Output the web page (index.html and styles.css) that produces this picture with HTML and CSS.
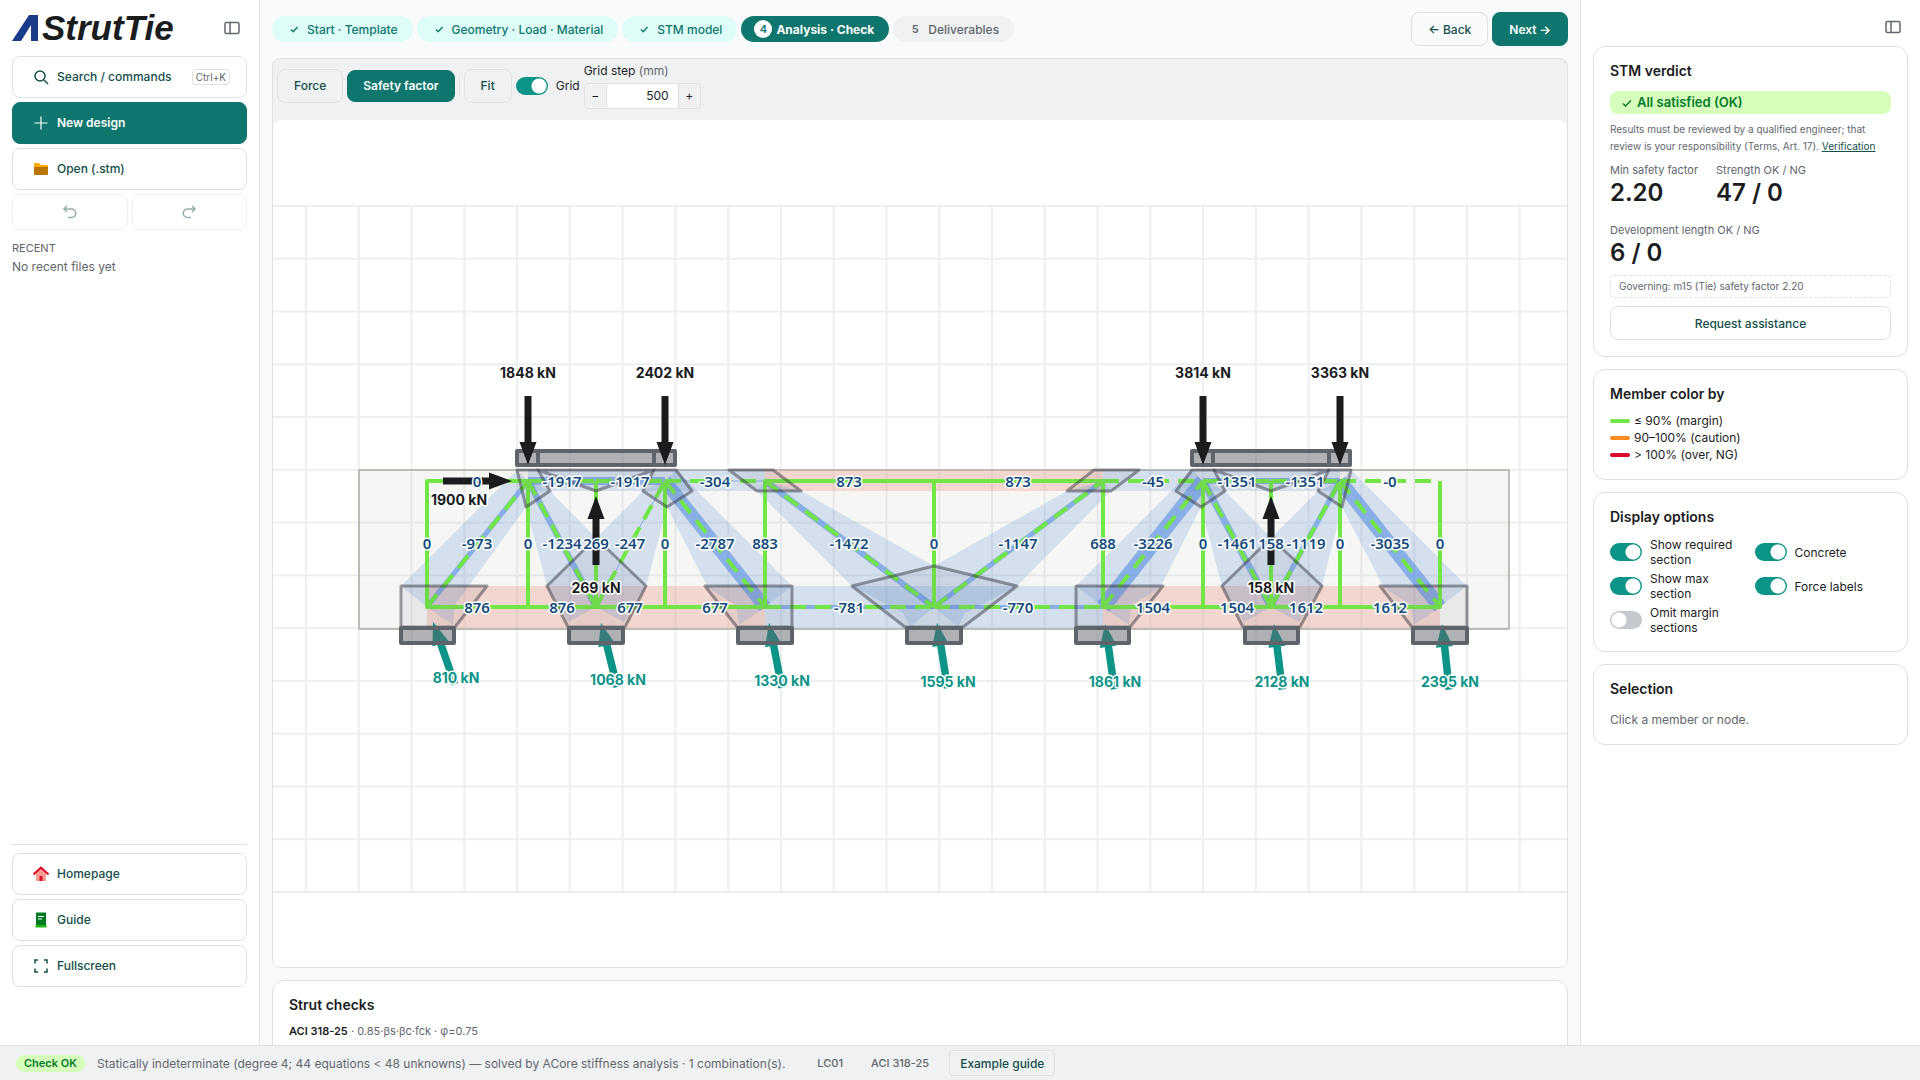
FILE: index.html
```html
<!DOCTYPE html>
<html lang="en">
<head>
<meta charset="utf-8">
<title>AStrutTie</title>
<meta name="viewport" content="width=device-width, initial-scale=1">
<link rel="stylesheet" href="styles.css">
</head>
<body>
<div class="app">
  <aside class="sidebar">
    <header class="brand">
      <div class="logo">
        <svg class="logo-mark" viewBox="0 0 26 26" aria-hidden="true"><path d="M0 26 17 0h9v26h-7V10L9 26z"/></svg>
        <span>StrutTie</span>
      </div>
      <button class="icon-btn" aria-label="Collapse sidebar">
        <svg class="panel-icon" viewBox="0 0 16 16"><rect x="1" y="2.500" width="14" height="11" rx="1.500"/><path d="M6 2.500v11"/></svg>
      </button>
    </header>
    <div class="stack">
      <button class="btn nav">
        <svg class="ico line" viewBox="0 0 16 16"><circle cx="7" cy="7" r="5"/><path d="m11 11 4 4"/></svg>
        Search / commands <kbd>Ctrl+K</kbd>
      </button>
      <button class="btn nav primary">
        <svg class="ico line" viewBox="0 0 16 16"><path d="M8 1.500v13M1.500 8h13"/></svg>
        New design
      </button>
      <button class="btn nav">
        <svg class="ico" viewBox="0 0 16 16"><path fill="#f9ab00" d="M1 3q0-1 1-1h4l2 2h6q1 0 1 1v2H1z"/><path fill="#ba7500" d="M1 6h14v7q0 1-1 1H2q-1 0-1-1z"/></svg>
        Open (.stm)
      </button>
      <div class="history">
        <button class="btn ghost" disabled aria-label="Undo"><svg class="ico line" viewBox="0 0 16 16"><path d="M5 2 2 5l3 3M2 5h7.500a4 4 0 0 1 0 8.500H6"/></svg></button>
        <button class="btn ghost" disabled aria-label="Redo"><svg class="ico line" viewBox="0 0 16 16"><path d="m11 2 3 3-3 3M14 5H6.500a4 4 0 0 0 0 8.500H10"/></svg></button>
      </div>
    </div>
    <section class="recent">
      <h2>RECENT</h2>
      <p>No recent files yet</p>
    </section>
    <nav class="stack side-foot">
      <button class="btn nav"><svg class="ico" viewBox="0 0 16 16"><path fill="#ff9c94" d="M3 7l5-5 5 5v8H3z"/><path fill="none" stroke="#dc0a2a" stroke-width="2" d="m.5 8.500 7.500-7 7.500 7"/><path fill="#dc0a2a" d="M6.500 10h3v5h-3z"/></svg>Homepage</button>
      <button class="btn nav"><svg class="ico" viewBox="0 0 16 16"><path fill="#007a22" d="M3 .500h10v13H3z"/><path fill="#1fb814" d="M2.500 13h11v2.500h-11z"/><path stroke="#fff" d="M5 4.500h6M5 7h4"/></svg>Guide</button>
      <button class="btn nav"><svg class="ico line" viewBox="0 0 16 16"><path d="M2 5.500V2h3M11 2h3v3.500M14 10.500V14h-3M5 14H2v-3.500"/></svg>Fullscreen</button>
    </nav>
  </aside>

  <main class="main">
    <div class="topbar">
      <ol class="steps">
        <li class="step done"><span class="num"><svg class="check" viewBox="0 0 10 10"><path d="m2 5.500 2.200 2.200L8.500 3"/></svg></span>Start · Template</li>
        <li class="step done"><span class="num"><svg class="check" viewBox="0 0 10 10"><path d="m2 5.500 2.200 2.200L8.500 3"/></svg></span>Geometry · Load · Material</li>
        <li class="step done"><span class="num"><svg class="check" viewBox="0 0 10 10"><path d="m2 5.500 2.200 2.200L8.500 3"/></svg></span>STM model</li>
        <li class="step current"><span class="num">4</span>Analysis · Check</li>
        <li class="step"><span class="num">5</span>Deliverables</li>
      </ol>
      <div class="pager">
        <button class="btn">← Back</button>
        <button class="btn primary">Next →</button>
      </div>
    </div>

    <section class="viewer">
      <div class="toolbar">
        <button class="btn">Force</button>
        <button class="btn primary short">Safety factor</button>
        <span class="divider"></span>
        <button class="btn">Fit</button>
        <label class="switch grid-switch"><input type="checkbox" checked>Grid</label>
        <div class="field">
          <label for="step">Grid step <span class="unit">(mm)</span></label>
          <div class="stepper">
            <button aria-label="Decrease">−</button>
            <input id="step" type="text" value="500">
            <button aria-label="Increase">+</button>
          </div>
        </div>
      </div>

      <svg class="canvas" viewBox="273 120 1294 847" role="img" aria-label="Strut-and-tie model">
        <defs>
          <pattern id="grid" x="305" y="205" width="52.770" height="52.770" patternUnits="userSpaceOnUse"><path d="M0 1h52.770M1 0v52.770" stroke="#edeef0" stroke-width="2"/></pattern>
          <path id="arrow" d="M0 0 8.500 23h-5v46h-7V23h-5z"/>
          <path id="arrow-r" d="M0 0 8.500 23h-4.500v43h-7.500V23h-5z"/>
        </defs>
        <rect x="273" y="205" width="1294" height="688" fill="url(#grid)"/>
        <rect class="concrete" x="359" y="470" width="1150" height="159"/>

        <g class="tie-max">
          <path d="M765 470h338v21H765zM427 586h338v42H427zM1103 586h337v42h-337z"/>
        </g>
        <g class="strut-max">
          <path d="M528 470h137v21H528z"/><path d="M665 470h100v21H665z"/>
          <path d="M1103 470h100v21h-100z"/><path d="M1203 470h137v21h-137z"/>
          <path d="M765 586h169v42H765z"/><path d="M934 586h169v42H934z"/>
          <path d="M401 586 517 470 528 481 526 507 455 605 453 625 427 607z"/>
          <path d="M526 507 528 481 550 491 596 538 596 607 568 622 547 586z"/>
          <path d="M596 538 643 491 665 481 667 507 646 586 624 622 596 607z"/>
          <path d="M676 470 792 586 765 607 739 625 736 605 708 588 667 507 665 481z"/>
          <path d="M757 491 765 481 801 491 934 566 934 607 910 627 903 613 852 586z"/>
          <path d="M934 566 1067 491 1103 481 1111 491 1017 586 965 613 958 627 934 607z"/>
          <path d="M1076 586 1192 470 1203 481 1201 507 1160 588 1131 605 1129 625 1103 607z"/>
          <path d="M1201 507 1203 481 1225 491 1271 538 1271 607 1244 622 1222 586z"/>
          <path d="M1271 538 1318 491 1340 481 1342 507 1322 586 1299 622 1271 607z"/>
          <path d="M1351 470 1467 586 1440 607 1414 625 1411 605 1384 588 1342 507 1340 481z"/>
        </g>
        <g class="strut-req">
          <path stroke-width="8" d="M528 481H665"/><path stroke-width="6" d="M1203 481h137"/>
          <path stroke-width="1" d="M665 481h100"/>
          <path stroke-width="4" d="M765 607h338"/>
          <path stroke-width="5" d="M427 607 528 481M934 607 1103 481M1271 607 1340 481"/>
          <path stroke-width="6" d="M528 481 596 607"/><path stroke-width="1" d="M596 607 665 481"/>
          <path stroke-width="13" d="M665 481 765 607"/><path stroke-width="6" d="M765 481 934 607"/>
          <path stroke-width="15" d="M1103 607 1203 481"/><path stroke-width="7" d="M1203 481 1271 607"/>
          <path stroke-width="14" d="M1340 481 1440 607"/>
        </g>

        <g class="tie">
          <path d="M528 481H427V607H765V481H1103V607H1440V481"/>
          <path d="M528 481V607M596 481V607M665 481V607M934 481V607M1203 481V607M1271 481V607M1340 481V607"/>
        </g>
        <g class="strut">
          <path d="M528 481h68"/><path d="M596 481h69"/><path d="M665 481h100"/><path d="M1103 481h100"/><path d="M1203 481h68"/><path d="M1271 481h69"/><path d="M1340 481h100"/>
          <path d="M765 607h169"/><path d="M934 607h169"/>
          <path d="M427 607 528 481"/><path d="M528 481 596 607"/><path d="M596 607 665 481"/><path d="M665 481 765 607"/><path d="M765 481 934 607"/>
          <path d="M934 607 1103 481"/><path d="M1103 607 1203 481"/><path d="M1203 481 1271 607"/><path d="M1271 607 1340 481"/><path d="M1340 481 1440 607"/>
        </g>

        <g class="node">
          <path d="M401 586h86l-32 41h-54z"/><path d="M517 470h21l12 21-24 16z"/><path d="M538 470h116l-58 21z"/>
          <path d="M654 470h22l16 21-25 16-24-16z"/><path d="M547 586 596 538 646 586 625 627H568z"/>
          <path d="M729 470h44l28 21h-44z"/><path d="M705 586h87v41h-55z"/>
          <path d="M852 586 934 566 1017 586 963 627H905z"/>
          <path d="M1094 470h45l-28 21h-44z"/><path d="M1076 586h87l-33 41h-54z"/>
          <path d="M1192 470h22l11 21-24 16-25-16z"/><path d="M1214 470h115l-58 21z"/><path d="M1329 470h22l-9 37-24-16z"/>
          <path d="M1222 586 1271 538 1322 586 1300 627H1243z"/><path d="M1380 586h87v41h-55z"/>
        </g>

        <g class="reaction">
          <use href="#arrow-r" transform="translate(433 622) rotate(-19)"/>
          <use href="#arrow-r" transform="translate(601 623) rotate(-14)"/>
          <use href="#arrow-r" transform="translate(769 623) rotate(-11)"/>
          <use href="#arrow-r" transform="translate(937 623) rotate(-9)"/>
          <use href="#arrow-r" transform="translate(1105 624) rotate(-8)"/>
          <use href="#arrow-r" transform="translate(1274 624) rotate(-7)"/>
          <use href="#arrow-r" transform="translate(1442 624) rotate(-6)"/>
        </g>
        <g class="plate">
          <path d="M401 628h53v15h-53zM569 628h54v15h-54zM738 628h54v15h-54zM907 628h54v15h-54zM1076 628h53v15h-53zM1245 628h53v15h-53zM1413 628h54v15h-54z"/>
          <path d="M517 451h158v14H517zM538 451v14M654 451v14M1192 451h158v14h-158zM1213 451v14M1329 451v14"/>
        </g>
        <g class="load">
          <use href="#arrow" transform="translate(528 465) rotate(180)"/>
          <use href="#arrow" transform="translate(665 465) rotate(180)"/>
          <use href="#arrow" transform="translate(1203 465) rotate(180)"/>
          <use href="#arrow" transform="translate(1340 465) rotate(180)"/>
          <use href="#arrow" transform="translate(512 481) rotate(90)"/>
          <use href="#arrow" transform="translate(596 496)"/>
          <use href="#arrow" transform="translate(1271 496)"/>
        </g>

        <g class="force">
          <text x="477" y="487">0</text><text x="562" y="487">-1917</text><text x="630" y="487">-1917</text><text x="715" y="487">-304</text><text x="849" y="487">873</text><text x="1018" y="487">873</text><text x="1153" y="487">-45</text><text x="1237" y="487">-1351</text><text x="1305" y="487">-1351</text><text x="1390" y="487">-0</text>
          <text x="427" y="549">0</text><text x="477" y="549">-973</text><text x="528" y="549">0</text><text x="562" y="549">-1234</text><text x="596" y="549">269</text><text x="630" y="549">-247</text><text x="665" y="549">0</text><text x="715" y="549">-2787</text><text x="765" y="549">883</text><text x="849" y="549">-1472</text><text x="934" y="549">0</text><text x="1018" y="549">-1147</text><text x="1103" y="549">688</text><text x="1153" y="549">-3226</text><text x="1203" y="549">0</text><text x="1237" y="549">-1461</text><text x="1271" y="549">158</text><text x="1306" y="549">-1119</text><text x="1340" y="549">0</text><text x="1390" y="549">-3035</text><text x="1440" y="549">0</text>
          <text x="477" y="613">876</text><text x="562" y="613">876</text><text x="630" y="613">677</text><text x="715" y="613">677</text><text x="849" y="613">-781</text><text x="1018" y="613">-770</text><text x="1153" y="613">1504</text><text x="1237" y="613">1504</text><text x="1306" y="613">1612</text><text x="1390" y="613">1612</text>
        </g>
        <g class="kn">
          <text x="528" y="378">1848 kN</text><text x="665" y="378">2402 kN</text><text x="1203" y="378">3814 kN</text><text x="1340" y="378">3363 kN</text>
          <text x="459" y="505">1900 kN</text><text x="596" y="593">269 kN</text><text x="1271" y="593">158 kN</text>
        </g>
        <g class="kn teal">
          <text x="456" y="683">810 kN</text><text x="618" y="685">1068 kN</text><text x="782" y="686">1330 kN</text><text x="948" y="687">1595 kN</text><text x="1115" y="687">1861 kN</text><text x="1282" y="687">2128 kN</text><text x="1450" y="687">2395 kN</text>
        </g>
      </svg>
    </section>

    <section class="card checks">
      <h2>Strut checks</h2>
      <p><strong>ACI 318-25</strong> · 0.85·βs·βc·fck · φ=0.75</p>
    </section>
  </main>

  <aside class="panel">
    <div class="panel-head">
      <button class="icon-btn" aria-label="Collapse panel">
        <svg class="panel-icon" viewBox="0 0 16 16"><rect x="1" y="2.500" width="14" height="11" rx="1.500"/><path d="M6 2.500v11"/></svg>
      </button>
    </div>
    <section class="card">
      <h2>STM verdict</h2>
      <p class="verdict"><svg class="check" viewBox="0 0 10 10"><path d="m1 5.500 2.500 2.500L9 2.500"/></svg>All satisfied (OK)</p>
      <p class="note">Results must be reviewed by a qualified engineer; that review is your responsibility (Terms, Art. 17). <a href="#">Verification</a></p>
      <dl class="stats">
        <div><dt>Min safety factor</dt><dd>2.20</dd></div>
        <div><dt>Strength OK / NG</dt><dd>47 / 0</dd></div>
        <div><dt>Development length OK / NG</dt><dd>6 / 0</dd></div>
      </dl>
      <p class="governing">Governing: m15 (Tie) safety factor 2.20</p>
      <button class="btn wide">Request assistance</button>
    </section>
    <section class="card">
      <h2>Member color by</h2>
      <ul class="legend">
        <li class="ok">≤ 90% (margin)</li>
        <li class="warn">90–100% (caution)</li>
        <li class="over">&gt; 100% (over, NG)</li>
      </ul>
    </section>
    <section class="card">
      <h2>Display options</h2>
      <div class="options">
        <label class="switch"><input type="checkbox" checked><span>Show required section</span></label>
        <label class="switch"><input type="checkbox" checked><span>Concrete</span></label>
        <label class="switch"><input type="checkbox" checked><span>Show max<br>section</span></label>
        <label class="switch"><input type="checkbox" checked><span>Force labels</span></label>
        <label class="switch"><input type="checkbox"><span>Omit margin sections</span></label>
      </div>
    </section>
    <section class="card">
      <h2>Selection</h2>
      <p class="hint">Click a member or node.</p>
    </section>
  </aside>

  <footer class="status">
    <span class="badge">Check OK</span>
    <span class="message">Statically indeterminate (degree 4; 44 equations &lt; 48 unknowns) — solved by ACore stiffness analysis · 1 combination(s).</span>
    <span class="tag">LC01</span>
    <span class="tag">ACI 318-25</span>
    <button class="btn small">Example guide</button>
  </footer>
</div>
</body>
</html>
```
FILE: styles.css
```css
:root {
  --line: #dee0e3;
  --teal: #0f766e;
  --teal-bright: #0d9488;
  --ink: #1a1c1e;
  --ink-teal: #134e4a;
  --muted: #62666d;
  --gray: #f0f1f3;
}
* { box-sizing: border-box; }
body {
  margin: 0;
  font: 12px/17px Inter, "Noto Sans", sans-serif;
  color: var(--ink);
  background: #f8fafc;
}
h2, p, ul, ol, dl, dd { margin: 0; padding: 0; }
ul, ol { list-style: none; }
button, input { font: inherit; }
h2 { font-size: 14px; line-height: 20px; font-weight: 600; }

.app {
  display: grid;
  grid-template: minmax(0, 1fr) auto / 260px minmax(0, 1fr) 340px;
  height: 100vh;
  overflow: hidden;
}

.btn {
  display: inline-flex;
  align-items: center;
  justify-content: center;
  height: 34px;
  padding: 0 16px;
  border: 1px solid var(--line);
  border-radius: 8px;
  background: transparent;
  color: var(--ink-teal);
  font-weight: 500;
  white-space: nowrap;
}
.btn.primary { background: var(--teal); border-color: var(--teal); color: #fff; font-weight: 600; }
.btn.short { height: 32px; padding: 0 15px; }
.icon-btn { display: flex; padding: 0; border: 0; background: none; color: var(--muted); }
.panel-icon { width: 16px; height: 16px; fill: none; stroke: currentColor; stroke-width: 1.500; }
.ico { width: 16px; height: 16px; flex: none; }
.line { fill: none; stroke: currentColor; stroke-width: 1.500; }
.check { width: 10px; height: 10px; fill: none; stroke: currentColor; stroke-width: 1.400; }

/* Sidebar */
.sidebar {
  display: flex;
  flex-direction: column;
  padding: 12px 12px 58px;
  background: #fff;
  border-right: 1px solid var(--line);
}
.brand { display: flex; align-items: center; justify-content: space-between; height: 32px; margin-bottom: 12px; padding-right: 7px; }
.logo { display: flex; align-items: center; gap: 4px; font: italic bold 35px/32px "Liberation Sans", Arial, sans-serif; }
.logo-mark { width: 26px; height: 26px; fill: #1a3a8a; }
.stack { display: flex; flex-direction: column; gap: 4px; }
.nav { height: 42px; padding: 0 16px 1px 20px; justify-content: flex-start; gap: 8px; }
.nav.primary .line { stroke-width: 1.200; }
kbd { margin-left: auto; padding: 0 3px; border: 1px solid var(--line); border-radius: 4px; font: 10px/14px Inter, sans-serif; color: var(--muted); }
.history { display: grid; grid-template-columns: 1fr 1fr; gap: 4px; }
.ghost { height: 36px; opacity: .45; }
.recent { margin-top: 8px; color: var(--muted); }
.recent h2 { font-size: 11px; line-height: 20px; font-weight: 400; }
.side-foot { margin-top: auto; padding-top: 8px; border-top: 1px solid var(--line); }

/* Main column */
.main { display: flex; flex-direction: column; padding: 12px; overflow: hidden; }
.main > * { flex: none; }
.topbar { display: flex; align-items: center; justify-content: space-between; height: 34px; margin-bottom: 12px; }
.steps, .pager { display: flex; gap: 4px; }
.step {
  display: flex;
  align-items: center;
  gap: 4px;
  height: 26px;
  padding: 0 15px 0 13px;
  border-radius: 13px;
  background: var(--gray);
  color: var(--muted);
  font-weight: 500;
}
.step.done { background: #dffdf8; color: var(--teal); }
.step.current { background: var(--teal); color: #fff; font-weight: 700; }
.num { display: flex; align-items: center; justify-content: center; width: 18px; height: 18px; border-radius: 9px; font-size: 11px; font-weight: 600; }
.current .num { background: #fff; color: var(--teal); }

.viewer { border: 1px solid var(--line); border-radius: 8px; background: var(--gray); overflow: hidden; }
.toolbar { display: flex; align-items: center; gap: 4px; padding: 3px 4px 11px; }
.divider { width: 1px; height: 20px; background: var(--line); }
.switch { display: flex; align-items: center; gap: 8px; line-height: 15px; }
.switch input {
  appearance: none;
  flex: none;
  width: 32px;
  height: 18px;
  margin: 0;
  border-radius: 9px;
  background: radial-gradient(circle at 9px 9px, #fff 7px, #c5c8cd 8px);
}
.switch input:checked { background: radial-gradient(circle at 23px 9px, #fff 7px, var(--teal-bright) 8px); }
.field { display: flex; flex-direction: column; gap: 3px; line-height: 18px; }
.unit { color: var(--muted); }
.stepper { display: flex; width: 117px; height: 26px; border: 1px solid var(--line); border-radius: 4px; overflow: hidden; }
.stepper button { width: 21px; padding: 0; border: 0; background: var(--gray); color: var(--ink); }
.stepper input { flex: 1; min-width: 0; padding: 0 9px; border: solid var(--line); border-width: 0 1px; background: #fff; text-align: right; color: var(--ink); }
.canvas { display: block; width: 100%; height: auto; border-radius: 8px 8px 0 0; background: #fff; }

.card { border: 1px solid var(--line); border-radius: 12px; background: #fff; padding: 14px 16px 16px; }
.checks { margin-top: 12px; min-height: 200px; }
.checks p { margin-top: 8px; font-size: 11px; color: var(--muted); }
.checks strong { color: var(--ink); font-weight: 600; }

/* Model drawing */
.concrete { fill: rgba(200, 200, 190, .16); stroke: #bdbdb8; stroke-width: 2; stroke-linejoin: round; }
.tie-max { fill: rgba(235, 150, 130, .33); }
.strut-max { fill: rgba(90, 145, 215, .22); }
.strut-req { fill: none; stroke: rgba(75, 135, 225, .55); }
.tie { fill: none; stroke: #72e645; stroke-width: 4; stroke-linejoin: round; }
.strut { fill: none; stroke: #72e645; stroke-width: 4; stroke-dasharray: 16 9; }
.node { fill: rgba(90, 90, 110, .08); stroke: rgba(50, 50, 60, .48); stroke-width: 3; stroke-linejoin: round; }
.plate { fill: rgba(95, 100, 106, .5); stroke: #5f646a; stroke-width: 4; stroke-linejoin: round; }
.load { fill: var(--ink); }
.reaction { fill: var(--teal-bright); }
.force, .kn { text-anchor: middle; paint-order: stroke; stroke: #fff; stroke-width: 3; stroke-linejoin: round; }
.force { font: 600 15px "Noto Sans", sans-serif; fill: #134a7c; }
.kn { font: 700 14px Inter, sans-serif; fill: var(--ink); }
.kn.teal { fill: var(--teal-bright); }

/* Inspector */
.panel { display: flex; flex-direction: column; gap: 12px; padding: 12px; background: #fff; border-left: 1px solid var(--line); overflow: hidden; }
.panel-head { display: flex; justify-content: flex-end; height: 22px; padding: 7px 7px 0 0; }
.verdict { display: flex; align-items: center; gap: 5px; height: 23px; margin-top: 10px; padding: 0 12px; border-radius: 8px; background: #d5ffbb; color: #067a2b; font-size: 13px; font-weight: 600; }
.note { margin-top: 7px; font-size: 10px; color: var(--muted); }
.note a { color: var(--ink-teal); }
.stats { display: flex; flex-wrap: wrap; gap: 14px 18px; margin-top: 6px; }
.stats dt { font-size: 11px; line-height: 18px; color: var(--muted); }
.stats dd { font-size: 24px; line-height: 28px; font-weight: 600; }
.governing { margin-top: 8px; padding: 2px 8px; border: 1px dashed var(--line); border-radius: 4px; font-size: 10px; color: var(--muted); }
.wide { width: 100%; margin-top: 8px; }
.legend { margin-top: 8px; }
.legend li { display: flex; align-items: center; gap: 4px; }
.legend li::before { content: ""; width: 20px; height: 4px; border-radius: 2px; background: currentColor; }
.legend .ok::before { background: #72e645; }
.legend .warn::before { background: #fb8b1e; }
.legend .over::before { background: #dc0a2a; }
.options { display: grid; grid-template-columns: 1fr 1fr; gap: 4px 8px; margin-top: 10px; }
.options .switch { min-height: 30px; }
.hint { margin-top: 12px; color: var(--muted); }

/* Status bar */
.status { grid-column: 1 / -1; display: flex; align-items: center; height: 35px; padding: 0 16px; border-top: 1px solid var(--line); background: var(--gray); color: var(--muted); }
.badge { padding: 0 8px; border-radius: 9px; background: #d5ffbb; color: #067a2b; font-size: 11px; font-weight: 600; }
.message { margin: 0 22px 0 12px; }
.tag { padding: 0 10px; margin-right: 8px; font-size: 11px; font-weight: 500; }
.small { height: 26px; padding: 0 10px; border-radius: 4px; margin-left: 2px; }
```
